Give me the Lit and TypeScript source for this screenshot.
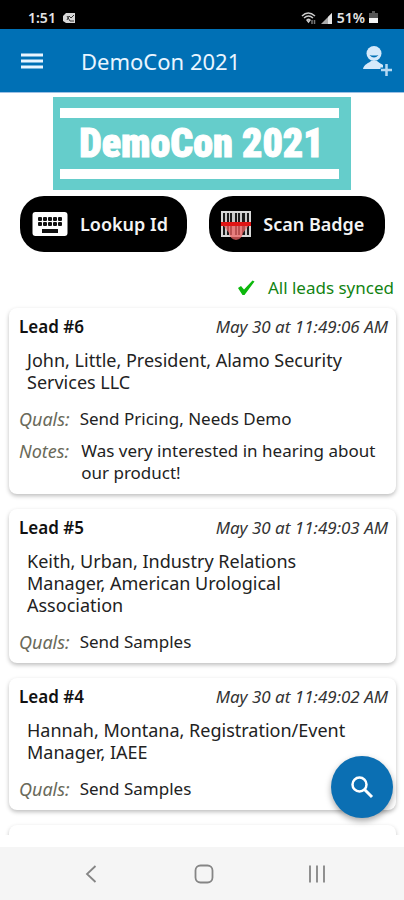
import { LitElement, html, css, svg, nothing } from "lit";
import { customElement, property } from "lit/decorators.js";

interface Lead {
  id: number;
  time: string;
  person: string;
  quals: string;
  notes?: string;
}

const LEADS: Lead[] = [
  {
    id: 6,
    time: "May 30 at 11:49:06 AM",
    person: "John, Little, President, Alamo Security Services LLC",
    quals: "Send Pricing, Needs Demo",
    notes: "Was very interested in hearing about our product!",
  },
  {
    id: 5,
    time: "May 30 at 11:49:03 AM",
    person: "Keith, Urban, Industry Relations Manager, American Urological Association",
    quals: "Send Samples",
  },
  {
    id: 4,
    time: "May 30 at 11:49:02 AM",
    person: "Hannah, Montana, Registration/Event Manager, IAEE",
    quals: "Send Samples",
  },
];

@customElement("lead-card")
export class LeadCard extends LitElement {
  @property({ attribute: false }) lead?: Lead;

  static styles = css`
    :host {
      display: block;
      flex: none;
      box-sizing: border-box;
      min-height: 60px;
      padding: 8px 8px 10px 10px;
      border-radius: 8px;
      background: #fff;
      box-shadow: 0 2px 4px rgba(0, 0, 0, 0.26);
      font-size: 17px;
      line-height: 22px;
      color: #222;
    }
    .head {
      display: flex;
      justify-content: space-between;
      align-items: baseline;
    }
    .title {
      margin: 0;
      font-size: 17px;
      font-weight: 600;
      color: #111;
    }
    .time {
      font-style: italic;
      color: #333;
    }
    .person {
      margin: 11px 12px 15px 8px;
      font-size: 18px;
    }
    .row {
      display: flex;
      gap: 10px;
    }
    .row + .row {
      gap: 12px;
      margin-top: 10px;
    }
    .label {
      font-size: 18px;
      font-style: italic;
      color: #6a6a5a;
    }
  `;

  render() {
    const l = this.lead;
    if (!l) return nothing;
    return html`
      <div class="head">
        <h2 class="title">Lead #${l.id}</h2>
        <span class="time">${l.time}</span>
      </div>
      <div class="person">${l.person}</div>
      <div class="row"><span class="label">Quals:</span><span>${l.quals}</span></div>
      ${l.notes
        ? html`<div class="row"><span class="label">Notes:</span><span>${l.notes}</span></div>`
        : nothing}
    `;
  }
}

const keys = [0, 1].map((r) =>
  [0, 1, 2, 3, 4].map((c) => svg`<rect x=${5 + c * 5} y=${5 + r * 5} width="4" height="4" rx="1" />`)
);

@customElement("app-root")
export class AppRoot extends LitElement {
  static styles = css`
    :host {
      display: flex;
      flex-direction: column;
      position: relative;
      height: 100vh;
      overflow: hidden;
      background: #fff;
      font-family: "Noto Sans", sans-serif;
    }
    svg {
      display: block;
      flex: none;
    }
    button {
      margin: 0;
      padding: 0;
      border: 0;
      background: none;
      font: inherit;
      color: inherit;
      cursor: pointer;
    }
    .status {
      display: flex;
      align-items: center;
      flex: none;
      gap: 6px;
      height: 29px;
      padding: 6px 26px 0 28px;
      box-sizing: border-box;
      background: #000;
      color: #e4e4e4;
      font-size: 14px;
      font-weight: 600;
      line-height: 20px;
    }
    .right {
      display: flex;
      align-items: center;
      gap: 4px;
      margin-left: auto;
    }
    .bar {
      display: flex;
      align-items: center;
      flex: none;
      height: 64px;
      padding: 0 12px 0 20px;
      background: #0070b5;
      border-bottom: 1px solid #9cc0e4;
      box-sizing: border-box;
      color: #e9f5ff;
    }
    .bar h1 {
      flex: 1;
      margin: 0 0 0 37px;
      font-size: 22px;
      font-weight: 400;
      line-height: 30px;
    }
    .banner {
      display: flex;
      flex-direction: column;
      justify-content: space-between;
      flex: none;
      align-self: center;
      width: 74%;
      height: 93px;
      margin-top: 4px;
      padding: 11px 12px 11px 7px;
      box-sizing: border-box;
      background: #65cdcb;
      color: #fff;
      text-align: center;
      text-indent: 4px;
      font-family: Impact, "Roboto Condensed", "Noto Sans CJK SC", sans-serif;
      font-size: 40px;
      font-weight: 900;
      line-height: 51px;
      white-space: nowrap;
      -webkit-text-stroke: 1px #fff;
    }
    .banner::before,
    .banner::after {
      content: "";
      flex: none;
      height: 10px;
      background: #fff;
    }
    .actions {
      display: flex;
      flex: none;
      gap: 22px;
      padding: 6px 19px 0 20px;
    }
    .action {
      display: flex;
      align-items: center;
      flex: 167 1 0;
      gap: 12px;
      height: 56px;
      padding-left: 12px;
      border-radius: 24px;
      background: #000;
      color: #f4f4f4;
      font-size: 18px;
      font-weight: 600;
      white-space: nowrap;
    }
    .scan {
      flex-grow: 176;
    }
    .sync {
      display: flex;
      align-items: center;
      justify-content: flex-end;
      flex: none;
      gap: 13px;
      margin: 24px 10px 0;
      font-size: 17px;
      line-height: 24px;
      color: #128312;
    }
    .list {
      display: flex;
      flex-direction: column;
      flex: 1;
      min-height: 0;
      gap: 15px;
      margin-bottom: 12px;
      padding: 8px 8px 0 9px;
      overflow: hidden;
    }
    .nav {
      display: flex;
      justify-content: space-between;
      align-items: center;
      flex: none;
      height: 53px;
      padding: 0 76px 0 80px;
      background: #f5f5f5;
    }
    .fab {
      position: absolute;
      right: 11px;
      bottom: 82px;
      display: grid;
      place-items: center;
      width: 62px;
      height: 62px;
      border-radius: 50%;
      background: #0b6fb3;
      box-shadow: 0 3px 6px rgba(0, 0, 0, 0.35);
    }
  `;

  render() {
    return html`
      <div class="status">
        <span>1:51</span>
        <svg width="14" height="12" viewBox="0 0 14 12">
          <path d="M4 1H13V11H4L1 9V4Z" fill="#d8d8d8" />
          <path d="M5 8 7 4 9 6 12 3M5 4 8 9H12" stroke="#333" fill="none" />
        </svg>
        <span class="right">
          <svg width="16" height="14" viewBox="0 0 16 14" fill="none" stroke="#ccc" stroke-width="1.5">
            <path d="M1 5Q7-1 14 5M3 7Q7.500 3 12 7M6 9Q7.500 7.500 9 9L7.500 11Z" />
            <path d="M11 9V13M13.500 13V9" stroke="#777" />
          </svg>
          <svg width="12" height="12" viewBox="0 0 12 12">
            <path d="M0 12 11 1V12Z" fill="#aaa" /><path d="M7 12V5L11 1V12Z" fill="#e4e4e4" />
          </svg>
          <span>51%</span>
          <svg width="9" height="13" viewBox="0 0 9 13">
            <path d="M3 0H6V2H9V7H0V2H3Z" fill="#555" /><path d="M0 7H9V12H0Z" fill="#f4f4f4" />
          </svg>
        </span>
      </div>

      <header class="bar">
        <button aria-label="Menu">
          <svg width="24" height="24" viewBox="0 0 24 24" fill="#e9f5ff">
            <path d="M1 4.500H23V7.500H1ZM1 10.500H23V13.500H1ZM1 16.500H23V19.500H1Z" />
          </svg>
        </button>
        <h1>DemoCon 2021</h1>
        <button aria-label="Add lead">
          <svg width="30" height="32" viewBox="0 0 30 32">
            <circle cx="12" cy="8.500" r="7.500" fill="#d5eafb" />
            <path d="M1 24C2 19 7 18 9 16H15C17 18 20 19 21 20V24Z" fill="#d5eafb" />
            <path d="M7.500 10Q12 15 16.500 10Q12 11 7.500 10Z" fill="#0070b5" />
            <path d="M24.500 18.500V30.500M18.500 25H30" stroke="#0070b5" stroke-width="5" />
            <path d="M24.500 19V31M19 25H30" stroke="#b5d9f3" stroke-width="2.500" />
          </svg>
        </button>
      </header>

      <div class="banner">DemoCon 2021</div>

      <div class="actions">
        <button class="action">
          <svg width="36" height="26" viewBox="0 0 36 26">
            <rect x="0.500" y="1" width="35" height="24" rx="3" fill="#fff" />
            <g fill="#111" transform="translate(1 1)">${keys}<rect x="9" y="17" width="16" height="4" /></g>
          </svg>
          Lookup Id
        </button>
        <button class="action scan">
          <svg width="30" height="34" viewBox="0 0 30 34">
            <rect x="0" y="4" width="30" height="26" fill="#d8d8d8" />
            <rect x="2" y="6" width="26" height="22" fill="#1a1a1a" />
            <path
              d="M4 6H6V28H4ZM8 6H9V28H8ZM11 6H14V28H11ZM16 6H17V28H16ZM19 6H21V28H19ZM24 6H26V28H24Z"
              fill="#c8c8c8"
            />
            <path d="M2 18H28L22 26Q21 32 15 33Q9 32 8 26Z" fill="#f06464" opacity="0.750" />
            <path d="M0 15H30V19H0Z" fill="#e01515" />
          </svg>
          Scan Badge
        </button>
      </div>

      <div class="sync">
        <svg width="18" height="16" viewBox="0 0 18 16">
          <path d="M1 8 4 6 7 9.500 15.500 0.500 17.500 1.500 7.500 15 5.500 15Z" fill="#0cb80c" />
        </svg>
        All leads synced
      </div>

      <main class="list">
        ${LEADS.map((l) => html`<lead-card .lead=${l}></lead-card>`)}
        <lead-card></lead-card>
      </main>

      <nav class="nav">
        <button aria-label="Back">
          <svg width="22" height="22" viewBox="0 0 22 22" fill="none" stroke="#858585" stroke-width="1.800">
            <path d="M15.500 3 7 11 15.500 19" />
          </svg>
        </button>
        <button aria-label="Home">
          <svg width="22" height="22" viewBox="0 0 22 22" fill="none" stroke="#858585" stroke-width="1.800">
            <rect x="2.500" y="2.500" width="17" height="17" rx="5" />
          </svg>
        </button>
        <button aria-label="Recent apps">
          <svg width="22" height="22" viewBox="0 0 22 22" fill="none" stroke="#858585" stroke-width="1.800">
            <path d="M4 2.500V19.500M11 2.500V19.500M18 2.500V19.500" />
          </svg>
        </button>
      </nav>

      <button class="fab" aria-label="Search leads">
        <svg width="24" height="24" viewBox="0 0 24 24" fill="none" stroke="#fff">
          <circle cx="9.500" cy="9.500" r="7" stroke-width="2.500" />
          <path d="M14.500 14.500 22 22" stroke-width="3" />
        </svg>
      </button>
    `;
  }
}
